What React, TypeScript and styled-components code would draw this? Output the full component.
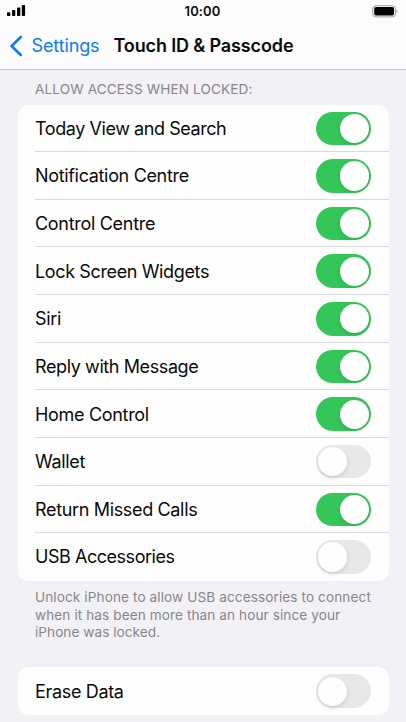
import React from "react";
import styled, { createGlobalStyle } from "styled-components";

const GlobalStyle = createGlobalStyle`
  * { box-sizing: border-box; }
  html, body { margin: 0; padding: 0; background: #f2f1f6; }
  body { overflow: hidden; }
`;

const Screen = styled.div`
  width: 406px;
  height: 722px;
  overflow: hidden;
  background: #f2f1f6;
  font-family: Inter, "Liberation Sans", sans-serif;
  color: #0a0a0a;
  display: flex;
  flex-direction: column;
`;

const Header = styled.header`
  height: 70px;
  flex: none;
  background: #fcfcfc;
  border-bottom: 1px solid #c6c6c9;
`;

const StatusBar = styled.div`
  height: 22px;
  display: grid;
  grid-template-columns: 1fr auto 1fr;
  align-items: center;
  padding: 0 8px 0 7px;
`;

const Time = styled.span`
  font-size: 13px;
  line-height: 22px;
  font-weight: 600;
  letter-spacing: 0.1px;
`;

const Signal = styled.svg`
  display: block;
`;

const Battery = styled.svg`
  display: block;
  justify-self: end;
`;

const NavBar = styled.nav`
  height: 47px;
  display: flex;
  align-items: center;
  padding-left: 9px;
`;

const Chevron = styled.svg`
  display: block;
  flex: none;
`;

const BackLabel = styled.span<{ $track: number }>`
  margin-left: 8.5px;
  width: 82px;
  font-size: 18px;
  line-height: 24px;
  letter-spacing: ${(p) => p.$track}px;
  color: #0d7bf7;
  white-space: nowrap;
`;

const Title = styled.h1<{ $track: number }>`
  margin: 0;
  font-size: 18px;
  line-height: 24px;
  font-weight: 600;
  letter-spacing: ${(p) => p.$track}px;
  white-space: nowrap;
`;

const Content = styled.main`
  padding: 0 17.5px;
`;

const SectionHeading = styled.h2`
  margin: 0;
  height: 34.5px;
  padding: 10px 0 0 17.5px;
  font-size: 13.6px;
  line-height: 18px;
  font-weight: 400;
  letter-spacing: 0.12px;
  color: #87878b;
  white-space: nowrap;
`;

const Card = styled.section`
  background: #fefefe;
  border-radius: 10.5px;
  padding-left: 17.5px;
`;

const Row = styled.div`
  height: 47.63px;
  display: flex;
  align-items: center;
  justify-content: space-between;
  padding-right: 17.5px;
  &:not(:last-child) {
    box-shadow: inset 0 -1px 0 #dadadc;
  }
`;

const Label = styled.span<{ $track: number }>`
  padding-top: 1px;
  font-size: 18px;
  line-height: 24px;
  letter-spacing: ${(p) => p.$track}px;
  white-space: nowrap;
`;

const Track = styled.span<{ $on: boolean }>`
  width: 55px;
  height: 33.5px;
  flex: none;
  border-radius: 17px;
  padding: 2.2px;
  display: flex;
  justify-content: ${(p) => (p.$on ? "flex-end" : "flex-start")};
  background: ${(p) => (p.$on ? "#35c65a" : "#e8e8e9")};
`;

const Knob = styled.span`
  width: 29.2px;
  height: 29.2px;
  border-radius: 50%;
  background: #fefefe;
  box-shadow: 0 2px 4px rgba(0, 0, 0, 0.12);
`;

const Footnote = styled.p`
  margin: 0;
  height: 86.5px;
  padding: 8.5px 0 0 17.5px;
`;

const FootLine = styled.span<{ $track: number }>`
  display: block;
  font-size: 13.6px;
  line-height: 17.4px;
  letter-spacing: ${(p) => p.$track}px;
  color: #87878b;
  white-space: nowrap;
`;

type Setting = { name: string; on: boolean; track: number };

const lockedAccess: Setting[] = [
  { name: "Today View and Search", on: true, track: -0.43 },
  { name: "Notification Centre", on: true, track: -0.33 },
  { name: "Control Centre", on: true, track: -0.3 },
  { name: "Lock Screen Widgets", on: true, track: -0.37 },
  { name: "Siri", on: true, track: -0.3 },
  { name: "Reply with Message", on: true, track: -0.4 },
  { name: "Home Control", on: true, track: -0.31 },
  { name: "Wallet", on: false, track: -0.33 },
  { name: "Return Missed Calls", on: true, track: -0.34 },
  { name: "USB Accessories", on: false, track: -0.46 },
];

const eraseData: Setting = { name: "Erase Data", on: false, track: -0.33 };

const SettingRow = ({ name, on, track }: Setting) => (
  <Row>
    <Label $track={track}>{name}</Label>
    <Track $on={on} role="switch" aria-checked={on} aria-label={name}>
      <Knob />
    </Track>
  </Row>
);

export default function App() {
  return (
    <Screen>
      <GlobalStyle />
      <Header>
        <StatusBar>
          <Signal width="19" height="12" viewBox="0 0 19 12">
            <rect x="0" y="7.2" width="3.3" height="3.8" rx="0.8" />
            <rect x="5" y="5" width="3.3" height="6" rx="0.8" />
            <rect x="10" y="2.6" width="3.3" height="8.4" rx="0.8" />
            <rect x="14.8" y="0" width="3.3" height="11" rx="0.8" />
          </Signal>
          <Time>10:00</Time>
          <Battery width="26" height="13" viewBox="0 0 26 13">
            <rect x="0.7" y="0.7" width="22.8" height="11.2" rx="3.2" fill="none" stroke="#9b9b9d" strokeWidth="1" />
            <rect x="2.2" y="2.1" width="19.8" height="8.4" rx="1.7" />
            <path d="M24.6 4.6c1 .5 1 3.2 0 3.7z" fill="#8a8a8c" />
          </Battery>
        </StatusBar>
        <NavBar>
          <Chevron width="14" height="22" viewBox="0 0 14 22">
            <path d="M11.8 2 2.6 11l9.2 9" fill="none" stroke="#0d7bf7" strokeWidth="2.6" strokeLinecap="round" strokeLinejoin="round" />
          </Chevron>
          <BackLabel $track={-0.12}>Settings</BackLabel>
          <Title $track={-0.13}>Touch ID &amp; Passcode</Title>
        </NavBar>
      </Header>
      <Content>
        <SectionHeading>ALLOW ACCESS WHEN LOCKED:</SectionHeading>
        <Card>
          {lockedAccess.map((s) => (
            <SettingRow key={s.name} {...s} />
          ))}
        </Card>
        <Footnote>
          <FootLine $track={0.1}>Unlock iPhone to allow USB accessories to connect</FootLine>
          <FootLine $track={0.09}>when it has been more than an hour since your</FootLine>
          <FootLine $track={0.05}>iPhone was locked.</FootLine>
        </Footnote>
        <Card>
          <SettingRow {...eraseData} />
        </Card>
      </Content>
    </Screen>
  );
}
